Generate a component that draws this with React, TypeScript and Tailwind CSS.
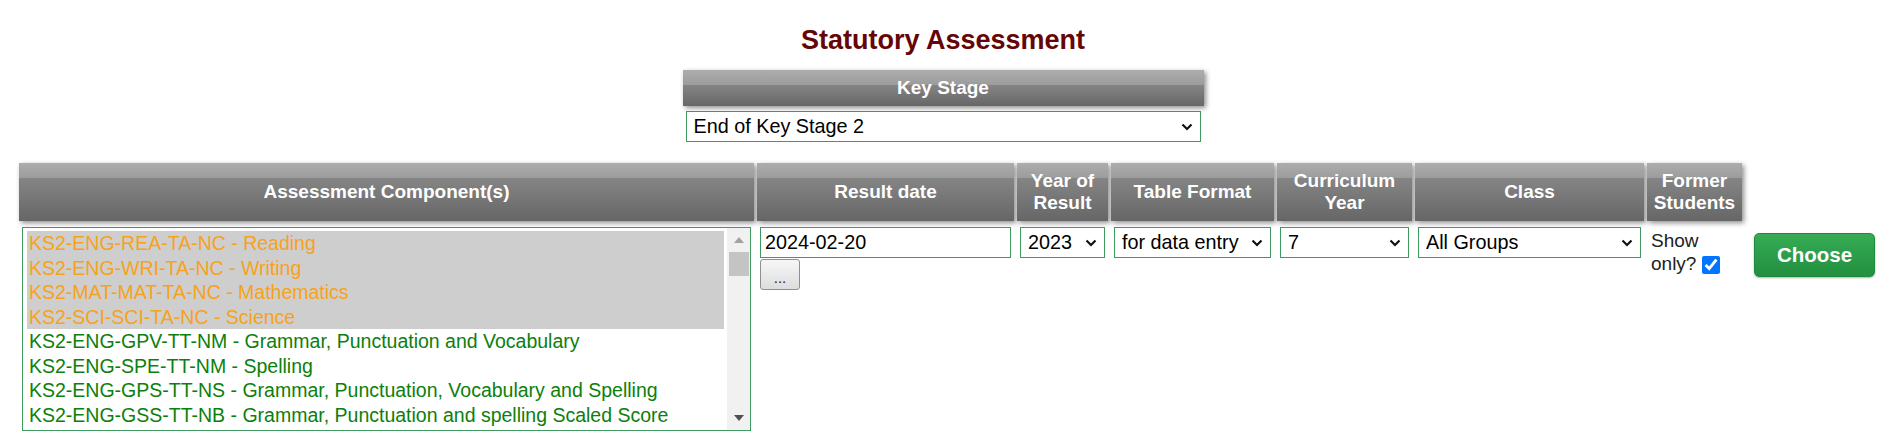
import React from 'react';

const selectedComponents = [
  'KS2-ENG-REA-TA-NC - Reading',
  'KS2-ENG-WRI-TA-NC - Writing',
  'KS2-MAT-MAT-TA-NC - Mathematics',
  'KS2-SCI-SCI-TA-NC - Science',
];

const otherComponents = [
  'KS2-ENG-GPV-TT-NM - Grammar, Punctuation and Vocabulary',
  'KS2-ENG-SPE-TT-NM - Spelling',
  'KS2-ENG-GPS-TT-NS - Grammar, Punctuation, Vocabulary and Spelling',
  'KS2-ENG-GSS-TT-NB - Grammar, Punctuation and spelling Scaled Score',
];

const headerClass =
  'flex items-center justify-center text-center text-white font-bold text-[19px] leading-[22px] bg-[linear-gradient(to_bottom,#adadad_0px,#9c9c9c_15px,#858585_15px,#666666_100%)] shadow-[2px_2px_5px_rgba(0,0,0,0.45)]';

function Chevron() {
  return (
    <svg
      className="pointer-events-none absolute right-[8px] top-1/2 -translate-y-1/2"
      width="12"
      height="8"
      viewBox="0 0 12 8"
      fill="none"
    >
      <polyline points="1.5,1.5 6,6 10.5,1.5" stroke="#111" strokeWidth="2.2" />
    </svg>
  );
}

function Select({ value, options }: { value: string; options: string[] }) {
  return (
    <div className="relative w-full">
      <select
        value={value}
        onChange={() => {}}
        className="w-full h-[31px] appearance-none border border-[#3f9a5f] bg-white pl-[7px] pr-[24px] text-[19.8px] text-black outline-none"
      >
        {options.map((o) => (
          <option key={o}>{o}</option>
        ))}
      </select>
      <Chevron />
    </div>
  );
}

function ComponentList() {
  return (
    <div className="flex h-[204px] w-full border border-[#3f9a5f] bg-white">
      <div className="flex-1 overflow-hidden pl-[4px] pr-[3px] pt-[3px]">
        {selectedComponents.map((c) => (
          <div key={c} className="h-[24.5px] bg-[#cecece] pl-[2px] text-[19.5px] leading-[24px] text-[#f7a21b] whitespace-nowrap">
            {c}
          </div>
        ))}
        {otherComponents.map((c) => (
          <div key={c} className="h-[24.5px] pl-[2px] text-[19.5px] leading-[24px] text-[#0c800c] whitespace-nowrap">
            {c}
          </div>
        ))}
      </div>
      {/* scrollbar */}
      <div className="flex w-[23px] flex-col items-center bg-[#f1f1f1]">
        <div className="flex h-[24px] w-full items-center justify-center">
          <svg width="10" height="6" viewBox="0 0 10 6">
            <polygon points="0,6 5,0 10,6" fill="#a3a3a3" />
          </svg>
        </div>
        <div className="mx-[2px] h-[24px] w-[20px] bg-[#c4c4c4]" />
        <div className="flex-1" />
        <div className="flex h-[24px] w-full items-center justify-center">
          <svg width="10" height="6" viewBox="0 0 10 6">
            <polygon points="0,0 10,0 5,6" fill="#505050" />
          </svg>
        </div>
      </div>
    </div>
  );
}

export default function App() {
  return (
    <div className="min-h-[445px] w-full bg-white font-['Liberation_Sans',Arial,sans-serif] text-black">
      <h1 className="pt-[25px] text-center text-[27px] font-bold leading-[31px] text-[#650505]">
        Statutory Assessment
      </h1>

      {/* Key stage */}
      <div className="mx-auto mt-[14px] flex w-[521px] flex-col gap-[5px]">
        <div className={`${headerClass} h-[36px]`}>Key Stage</div>
        <div className="px-[3px]">
          <Select value="End of Key Stage 2" options={['End of Key Stage 1', 'End of Key Stage 2']} />
        </div>
      </div>

      {/* Main selection table */}
      <div className="mt-[21px] grid grid-cols-[735px_257px_91px_163px_135px_229px_95px_auto] gap-[3px] pl-[19px]">
        <div className={`${headerClass} h-[58px]`}>Assessment Component(s)</div>
        <div className={headerClass}>Result date</div>
        <div className={headerClass}>
          Year of
          <br />
          Result
        </div>
        <div className={headerClass}>Table Format</div>
        <div className={headerClass}>
          Curriculum
          <br />
          Year
        </div>
        <div className={headerClass}>Class</div>
        <div className={headerClass}>
          Former
          <br />
          Students
        </div>
        <div />

        <div className="p-[3px]">
          <ComponentList />
        </div>
        <div className="flex flex-col items-start gap-[1px] p-[3px]">
          <input
            value="2024-02-20"
            readOnly
            className="h-[31px] w-full border border-[#3f9a5f] bg-white pl-[4px] text-[19.8px] text-black outline-none"
          />
          <button className="h-[31px] w-[40px] rounded-[3px] border border-[#8f8f8f] bg-[linear-gradient(to_bottom,#f7f7f7,#dddddd)] pt-[6px] text-[15px] leading-none text-[#222]">
            ...
          </button>
        </div>
        <div className="p-[3px]">
          <Select value="2023" options={['2022', '2023', '2024']} />
        </div>
        <div className="p-[3px]">
          <Select value="for data entry" options={['for data entry', 'for display']} />
        </div>
        <div className="p-[3px]">
          <Select value="7" options={['6', '7', '8']} />
        </div>
        <div className="p-[3px]">
          <Select value="All Groups" options={['All Groups']} />
        </div>
        <div className="px-[4px] pt-[5px] text-[19px] leading-[23px] text-[#222]">
          Show
          <br />
          only?{' '}
          <input
            type="checkbox"
            checked
            onChange={() => {}}
            className="m-0 h-[18px] w-[18px] align-middle accent-[#0075ff]"
          />
        </div>
        <div className="pl-[9px] pt-[9px]">
          <button className="h-[44px] w-[121px] rounded-[5px] border border-[#1f8a3a] bg-[linear-gradient(to_bottom,#36ab56,#22903f)] text-[20.5px] font-bold text-white shadow-[0_1px_2px_rgba(0,0,0,0.3)]">
            Choose
          </button>
        </div>
      </div>
    </div>
  );
}
